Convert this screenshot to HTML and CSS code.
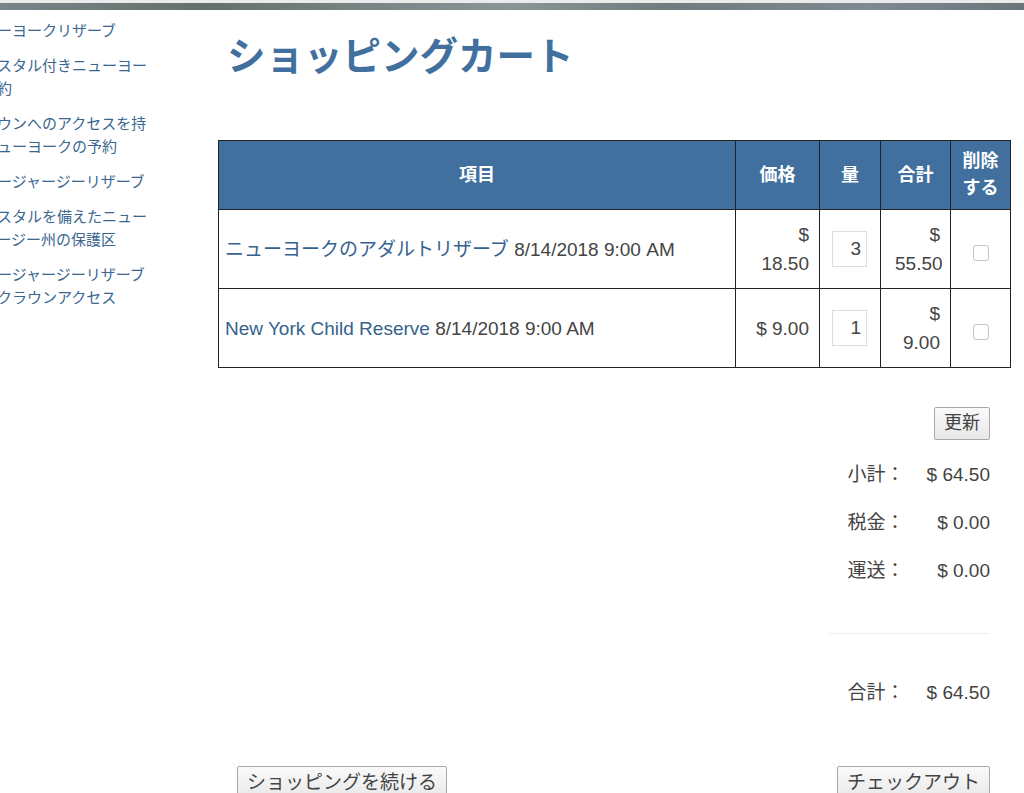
FILE: index.html
```html
<!DOCTYPE html>
<html lang="ja">
<head>
  <meta charset="UTF-8" />
  <meta name="viewport" content="width=device-width, initial-scale=1.0"/>
  <title>ショッピングカート</title>
  <link rel="stylesheet" href="styles.css">
</head>
<body>

  <div class="banner"></div>

  <div class="page">
    <ul class="side-nav">
      <li><a href="#">ニューヨークリザーブ</a></li>
      <li><a href="#">クリスタル付きニューヨーク予約</a></li>
      <li><a href="#">各タウンへのアクセスを持つニューヨークの予約</a></li>
      <li><a href="#">ニュージャージーリザーブ</a></li>
      <li><a href="#">クリスタルを備えたニュージャージー州の保護区</a></li>
      <li><a href="#">ニュージャージーリザーブ付きクラウンアクセス</a></li>
    </ul>

    <div class="main">
      <h1 class="title">ショッピングカート</h1>

      <table class="cart">
        <thead>
          <tr>
            <th class="col-item">項目</th>
            <th class="col-price">価格</th>
            <th class="col-qty">量</th>
            <th class="col-total">合計</th>
            <th class="col-del">削除する</th>
          </tr>
        </thead>
        <tbody>
          <tr>
            <td><a href="#">ニューヨークのアダルトリザーブ</a> 8/14/2018 9:00 AM</td>
            <td class="num">$ 18.50</td>
            <td class="qty"><input type="text" value="3"></td>
            <td class="num">$ 55.50</td>
            <td class="del"><input type="checkbox"></td>
          </tr>
          <tr>
            <td><a href="#">New York Child Reserve</a> 8/14/2018 9:00 AM</td>
            <td class="num">$ 9.00</td>
            <td class="qty"><input type="text" value="1"></td>
            <td class="num">$ 9.00</td>
            <td class="del"><input type="checkbox"></td>
          </tr>
        </tbody>
      </table>

      <div class="cart-side">
        <button class="btn">更新</button>

        <div class="summary">
          <span class="label">小計：</span><span class="value">$ 64.50</span>
          <span class="label">税金：</span><span class="value">$ 0.00</span>
          <span class="label">運送：</span><span class="value">$ 0.00</span>
        </div>
        <hr class="divider">
        <div class="summary">
          <span class="label">合計：</span><span class="value">$ 64.50</span>
        </div>
      </div>

      <div class="cart-buttons">
        <button class="btn">ショッピングを続ける</button>
        <button class="btn">チェックアウト</button>
      </div>
    </div>
  </div>

</body>
</html>
```

FILE: styles.css
```css
body {
  margin: 0;
  padding: 0;
  background: #fff;
  color: #444;
  font-family: "Liberation Sans", "Noto Sans CJK JP", sans-serif;
  font-size: 19px;
  overflow: hidden;
}

a {
  color: #35628f;
  text-decoration: none;
}

.banner {
  height: 7px;
  border-top: 3px solid #ebebeb;
  background: linear-gradient(to right, #77858a, #66706a 20%, #7e898b 40%, #8b9596 50%, #6f7b7d 65%, #7d8a90 85%, #68767a);
}

.page {
  display: flex;
}

/* left nav, partly cut off by the window edge */
.side-nav {
  list-style: none;
  margin: 9px 0 0 -33px;
  padding: 0;
  width: 185px;
  flex-shrink: 0;
  font-size: 15px;
  line-height: 23px;
}

.side-nav li {
  margin-bottom: 12px;
}

.side-nav a {
  color: #3a6690;
}

.main {
  margin-left: 66px;
  width: 792px;
}

.title {
  margin: 25px 0 61px 9px;
  font-size: 38.5px;
  line-height: 44px;
  font-weight: bold;
  color: #41709f;
}

.cart {
  width: 792px;
  border-collapse: collapse;
  table-layout: fixed;
  line-height: 29px;
}

.cart th,
.cart td {
  box-sizing: border-box;
  border: 1px solid #222;
}

.cart th {
  background: #41709f;
  color: #fff;
  font-size: 18px;
  line-height: 27px;
  padding: 7px 6px;
}

.col-item { width: 517px; }
.col-price { width: 84px; }
.col-qty { width: 61px; }
.col-total { width: 70px; }
.col-del { width: 60px; }

.cart td {
  padding: 10px 9px 10px 6px;
}

.cart td.num {
  text-align: right;
  padding: 10px 10px 10px 14px;
}

.cart td.qty {
  padding: 0 12px;
}

.qty input {
  display: block;
  width: 35px;
  height: 36px;
  box-sizing: border-box;
  border: 1px solid #ddd;
  font: inherit;
  color: #444;
  text-align: right;
  padding: 0 5px 0 0;
}

.cart td.del {
  text-align: center;
  padding: 0;
}

.del input {
  appearance: none;
  width: 16px;
  height: 16px;
  margin: 6px 0 0;
  border: 1px solid #c4c4c4;
  border-radius: 3px;
  background: #fff;
  vertical-align: middle;
}

.btn {
  font-family: "Liberation Sans", "Noto Sans CJK JP", sans-serif;
  font-size: 19px;
  color: #444;
  background: linear-gradient(#fafafa, #e8e8e8);
  border: 1px solid #aaa;
  border-radius: 2px;
  padding: 2px 9px;
  line-height: 27px;
}

.cart-side {
  display: flex;
  flex-direction: column;
  align-items: flex-end;
  padding-right: 20px;
  margin-top: 39px;
}

.cart-side .btn {
  font-size: 18px;
  padding: 2px 9px 2px;
}

.summary {
  display: grid;
  grid-template-columns: 1fr auto;
  column-gap: 22px;
  width: 161px;
  line-height: 48px;
}

.cart-side .btn + .summary {
  margin-top: 11px;
}

.summary .label,
.summary .value {
  text-align: right;
  white-space: nowrap;
}

.summary .value {
  min-width: 63px;
}

.divider {
  width: 161px;
  margin: 38px 0 35px;
  border: 0;
  border-top: 1px solid #eee;
}

.cart-buttons {
  display: flex;
  justify-content: space-between;
  padding: 0 20px 0 19px;
  margin-top: 49px;
}
```
